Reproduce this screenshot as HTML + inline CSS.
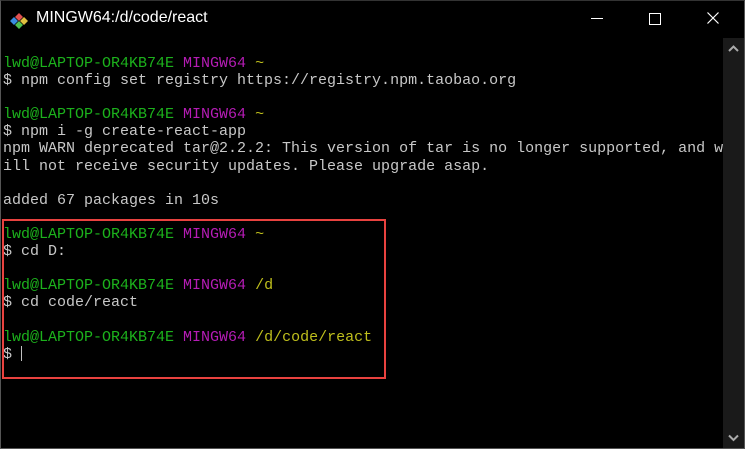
<!DOCTYPE html>
<html><head><style>
body{margin:0;width:745px;height:449px;background:#000;overflow:hidden;position:relative;font-family:"Liberation Sans",sans-serif}
.title{position:absolute;left:36px;top:9px;color:#fff;font-size:16px}
pre{position:absolute;left:3px;top:55px;margin:0;font-family:"Liberation Mono",monospace;font-size:15px;line-height:17.1px;color:#c8c8c8}
.g{color:#1cb21c}.m{color:#b51cb5}.y{color:#bfbf1c}
.sb{position:absolute;left:723px;top:38px;width:21px;height:410px;background:#1a1a1a}
.box{position:absolute;left:2px;top:219px;width:380px;height:156px;border:2px solid #e8423f}
.frame{position:absolute;left:0;top:0;width:743px;height:447px;border:1px solid #555;border-top:1px solid #333}
</style></head><body>
<div class="frame"></div>
<svg style="position:absolute;left:10px;top:12px" width="20" height="18" viewBox="0 0 20 18">
<polygon points="9,1 13,5 9,9 5,5" fill="#e05050"/><polygon points="4,5 8,9 4,13 0,9" fill="#3a8de0"/><polygon points="14,5 18,9 14,13 10,9" fill="#e0c040"/><polygon points="9,9 13,13 9,17 5,13" fill="#50c050"/></svg>
<div class="title">MINGW64:/d/code/react</div>
<div style="position:absolute;left:591px;top:18px;width:12px;height:1px;background:#fff"></div>
<div style="position:absolute;left:649px;top:13px;width:10px;height:10px;border:1px solid #fff"></div>
<svg style="position:absolute;left:707px;top:12px" width="12" height="12"><path d="M0.5 0.5L11.5 11.5M11.5 0.5L0.5 11.5" stroke="#fff" stroke-width="1.2"/></svg>
<div class="sb"></div>
<svg style="position:absolute;left:728px;top:45px" width="11" height="8"><path d="M1 6L5.5 1.5L10 6" stroke="#aaa" stroke-width="2" fill="none"/></svg>
<svg style="position:absolute;left:728px;top:434px" width="11" height="8"><path d="M1 1.5L5.5 6L10 1.5" stroke="#aaa" stroke-width="2" fill="none"/></svg>
<pre><span class="g">lwd@LAPTOP-OR4KB74E</span> <span class="m">MINGW64</span> <span class="y">~</span>
$ npm config set registry https://registry.npm.taobao.org

<span class="g">lwd@LAPTOP-OR4KB74E</span> <span class="m">MINGW64</span> <span class="y">~</span>
$ npm i -g create-react-app
npm WARN deprecated tar@2.2.2: This version of tar is no longer supported, and w
ill not receive security updates. Please upgrade asap.

added 67 packages in 10s

<span class="g">lwd@LAPTOP-OR4KB74E</span> <span class="m">MINGW64</span> <span class="y">~</span>
$ cd D:

<span class="g">lwd@LAPTOP-OR4KB74E</span> <span class="m">MINGW64</span> <span class="y">/d</span>
$ cd code/react

<span class="g">lwd@LAPTOP-OR4KB74E</span> <span class="m">MINGW64</span> <span class="y">/d/code/react</span>
$ <span style="display:inline-block;width:1px;height:15px;background:#c0c0c0;vertical-align:-3px"></span></pre>
<div class="box"></div>
</body></html>
